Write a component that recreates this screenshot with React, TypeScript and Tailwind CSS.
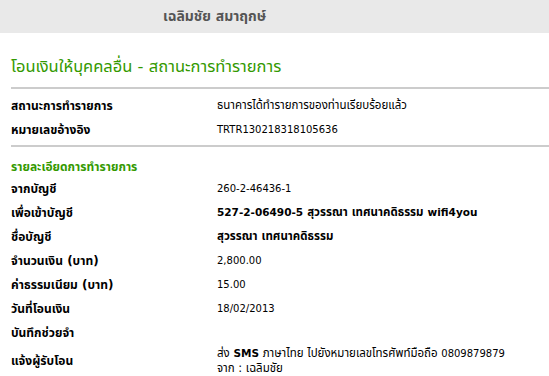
import React from "react";

const font = { fontFamily: '"DejaVu Sans", Verdana, "Noto Sans Thai", sans-serif' };

type Row = { label: string; value?: React.ReactNode; bold?: boolean };

// latin text renders a touch smaller than the thai glyphs
const Lat: React.FC<{ children: React.ReactNode; className?: string }> = ({ children, className }) => (
  <span className={className ?? "text-[10px]"}>{children}</span>
);

const statusRows: Row[] = [
  { label: "สถานะการทำรายการ", value: "ธนาคารได้ทำรายการของท่านเรียบร้อยแล้ว" },
  { label: "หมายเลขอ้างอิง", value: <Lat>TRTR130218318105636</Lat> },
];

const detailRows: Row[] = [
  { label: "จากบัญชี", value: <Lat>260-2-46436-1</Lat> },
  {
    label: "เพื่อเข้าบัญชี",
    value: (
      <span className="font-bold">
        <Lat className="text-[10.5px]">527-2-06490-5</Lat> สุวรรณา เทศนาคดิธรรม{" "}
        <Lat className="text-[10.5px]">wifi4you</Lat>
      </span>
    ),
  },
  { label: "ชื่อบัญชี", value: "สุวรรณา เทศนาคดิธรรม", bold: true },
  { label: "จำนวนเงิน (บาท)", value: <Lat>2,800.00</Lat> },
  { label: "ค่าธรรมเนียม (บาท)", value: <Lat>15.00</Lat> },
  { label: "วันที่โอนเงิน", value: <Lat>18/02/2013</Lat> },
  { label: "บันทึกช่วยจำ" },
];

const InfoRow: React.FC<{ row: Row }> = ({ row }) => (
  <div className="flex h-[24px] items-center">
    <div className="w-[206px] shrink-0 text-[12px] font-bold">{row.label}</div>
    <div className={row.bold ? "font-bold" : ""}>{row.value}</div>
  </div>
);

export default function App() {
  return (
    <div className="min-h-[376px] w-[549px] overflow-hidden bg-white text-[11.5px] text-black" style={font}>
      {/* top bar with user name */}
      <div className="flex h-[33px] items-center bg-[#e9e9e9] pl-[163px] text-[14px] font-bold text-[#555]">
        เฉลิมชัย สมาฤกษ์
      </div>

      <div className="pl-[11px]">
        <div className="flex h-[54px] items-end pb-[8px] text-[16.5px] leading-[24px] text-[#339900]">
          โอนเงินให้บุคคลอื่น - สถานะการทำรายการ
        </div>
        <div className="h-[2px] bg-[#cccccc]" />

        <div className="pt-[5px]">
          {statusRows.map((r) => (
            <InfoRow key={r.label} row={r} />
          ))}
        </div>
        <div className="mt-[3px] h-[2px] bg-[#cccccc]" />

        <div className="flex h-[30px] items-end pb-[1px] text-[12px] font-bold leading-[18px] text-[#339900]">
          รายละเอียดการทำรายการ
        </div>
        {detailRows.map((r) => (
          <InfoRow key={r.label} row={r} />
        ))}

        {/* SMS notice spans two lines */}
        <div className="flex items-center py-[1px]">
          <div className="w-[206px] shrink-0 text-[12px] font-bold">แจ้งผู้รับโอน</div>
          <div className="leading-[14px]">
            <div>
              ส่ง <Lat className="text-[10.5px] font-bold">SMS</Lat> ภาษาไทย ไปยังหมายเลขโทรศัพท์มือถือ{" "}
              <Lat>0809879879</Lat>
            </div>
            <div>จาก : เฉลิมชัย</div>
          </div>
        </div>
      </div>
    </div>
  );
}
